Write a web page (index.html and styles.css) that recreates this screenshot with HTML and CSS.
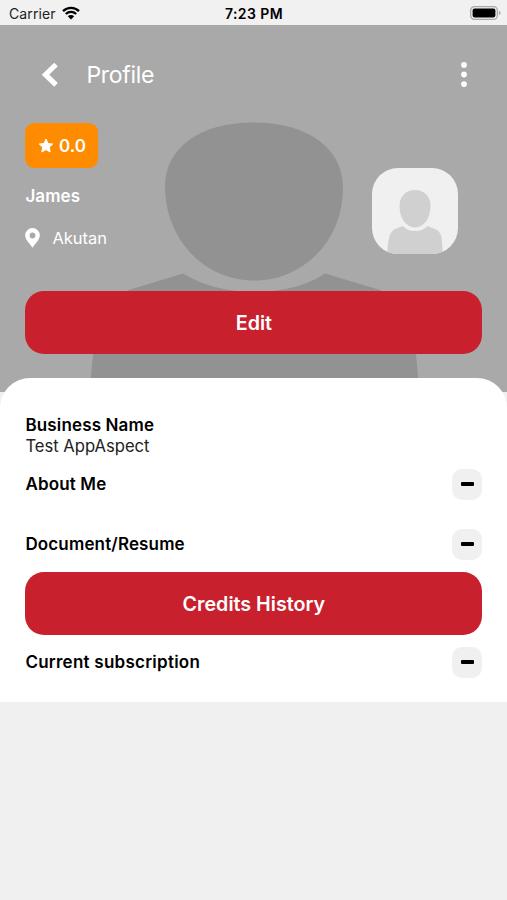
FILE: index.html
```html
<!DOCTYPE html>
<html lang="en">
<head>
    <meta charset="UTF-8">
    <meta name="viewport" content="width=device-width, initial-scale=1.0">
    <title>Profile</title>
    <link rel="stylesheet" href="styles.css">
</head>
<body>
    <div class="status">
        <div class="carrier">
            <span>Carrier</span>
            <svg width="18" height="14" viewBox="0 0 18 14">
                <path d="M1 5.2a11.5 11.5 0 0 1 16 0M3.8 8a7.6 7.6 0 0 1 10.4 0" fill="none" stroke="#000" stroke-width="2.3"/>
                <path d="M9 13.5L5.8 10.3a4.6 4.6 0 0 1 6.4 0z"/>
            </svg>
        </div>
        <span class="time">7:23 PM</span>
        <svg class="battery" width="31" height="14" viewBox="0 0 31 14">
            <rect x=".7" y=".7" width="26.6" height="12.6" rx="3.6" fill="#f1f1f1" stroke="#a9a9a9" stroke-width="1.3"/>
            <rect x="2.6" y="2.6" width="22.8" height="8.8" rx="1.8"/>
            <path d="M28.8 4.8q1.8.6 1.8 2.2t-1.8 2.2z" fill="#a9a9a9"/>
        </svg>
    </div>

    <div class="hero">
        <svg class="cover" width="507" height="367" viewBox="0 25 507 367">
            <path d="M253 122.5C200 122.5 165 148 165 186C165 240 205 280.5 254 280.5C304 280.5 343 240 343 188C343 148 308 122.5 253 122.5z"/>
            <path d="M183 273.5L129 290Q104 300 98 326Q92 352 90 392H419Q417 352 411 326Q404 300 380 290L325 273.5Q297 292 254 292Q214 292 183 273.5z"/>
        </svg>

        <div class="nav">
            <svg width="16" height="26" viewBox="0 0 16 26">
                <path d="M14 2.5L3.5 12.7l10.5 10.2" fill="none" stroke="#fff" stroke-width="5.2"/>
            </svg>
            <h1>Profile</h1>
            <svg class="dots" width="6" height="26" viewBox="0 0 6 26" fill="#fff">
                <circle cx="3" cy="2.9" r="2.9"/>
                <circle cx="3" cy="12.5" r="2.9"/>
                <circle cx="3" cy="22.1" r="2.9"/>
            </svg>
        </div>

        <div class="person">
            <div class="info">
                <div class="rating">
                    <svg width="16" height="15" viewBox="0 0 16 15">
                        <path d="M8 1l2 4.5 4.8.5-3.6 3.2 1 4.8L8 11.6l-4.2 2.4 1-4.8L1.2 6 6 5.500z" fill="#fff" stroke="#fff" stroke-linejoin="round"/>
                    </svg>
                    <span>0.0</span>
                </div>
                <div class="name">James</div>
                <div class="place">
                    <svg width="15" height="20" viewBox="0 0 15 20">
                        <path d="M7.5 0A7.3 7.3 0 0 0 .2 7.3C.2 12 5 15.5 7.5 19.8C10 15.5 14.8 12 14.8 7.3A7.3 7.3 0 0 0 7.5 0zM7.5 4.6a2.9 2.9 0 1 1 0 5.8a2.9 2.9 0 0 1 0-5.8z" fill="#fff" fill-rule="evenodd"/>
                    </svg>
                    <span>Akutan</span>
                </div>
            </div>
            <div class="avatar">
                <svg width="86" height="86" viewBox="0 0 86 86" fill="#d0d0d0">
                    <path d="M43 22C33 22 27.5 29 27.5 38C27.5 50 34 59.500 43 59.500C52 59.500 58.500 50 58.500 38C58.500 29 53 22 43 22z"/>
                    <path d="M31 58Q35 63 43 63Q51 63 55.5 58L63 61Q68.5 63 69.5 70Q70.5 76 70.5 86H15.5Q15.5 76 17 70Q18.500 63 24 60.500z"/>
                </svg>
            </div>
        </div>

        <button class="btn edit">Edit</button>
    </div>

    <div class="sheet">
        <div class="business">
            <h2>Business Name</h2>
            <p>Test AppAspect</p>
        </div>
        <div class="row about">
            <h2>About Me</h2>
            <span class="toggle"></span>
        </div>
        <div class="row document">
            <h2>Document/Resume</h2>
            <span class="toggle"></span>
        </div>
        <button class="btn">Credits History</button>
        <div class="row subscription">
            <h2>Current subscription</h2>
            <span class="toggle"></span>
        </div>
    </div>
</body>
</html>
```
FILE: styles.css
```css
* {
    margin: 0;
    padding: 0;
    box-sizing: border-box;
}
body {
    min-height: 900px;
    background: #f0f0f0;
    font-family: Inter, "Liberation Sans", sans-serif;
    color: #000;
}
svg {
    display: block;
}

/* status bar */
.status {
    display: grid;
    grid-template-columns: 1fr auto 1fr;
    align-items: center;
    height: 25px;
    padding: 2px 6px 0 9px;
    background: #f1f1f1;
    font-size: 14px;
}
.carrier {
    display: flex;
    align-items: center;
    gap: 6px;
    letter-spacing: .1px;
    color: #222;
}
.carrier svg,
.battery {
    margin-top: -2px;
}
.time {
    margin-right: 2px;
    font-weight: 600;
    letter-spacing: .4px;
}
.battery {
    justify-self: end;
}

/* grey cover with the profile */
.hero {
    position: relative;
    height: 367px;
    padding: 37px 24.6px 0 25.4px;
    background: #a9a9a9;
    color: #fff;
}
/* silhouette behind the text */
.cover {
    position: absolute;
    top: 0;
    left: 0;
    fill: #929292;
}
.nav,
.person,
.hero .btn {
    position: relative;
}
.nav {
    display: flex;
    align-items: center;
    height: 25px;
    padding: 0 15px 0 17px;
}
.nav h1 {
    margin-left: 28px;
    font-size: 23px;
    font-weight: 400;
    letter-spacing: -.3px;
}
.dots {
    margin-left: auto;
}
.person {
    display: flex;
    justify-content: space-between;
    height: 168px;
    padding: 36px 24px 0 0;
}
.rating {
    display: flex;
    align-items: center;
    justify-content: center;
    gap: 5px;
    width: 73px;
    height: 45px;
    border-radius: 9px;
    background: #ff8c00;
    font-size: 17px;
    font-weight: 600;
}
.name {
    margin-top: 17px;
    font-size: 17px;
    line-height: 22px;
    font-weight: 600;
    letter-spacing: .1px;
}
.place {
    display: flex;
    align-items: center;
    gap: 12px;
    margin-top: 20px;
    font-size: 16.5px;
    line-height: 22px;
}
.avatar {
    width: 86px;
    height: 86px;
    margin-top: 45px;
    border-radius: 26px;
    background: #f0f0f0;
    overflow: hidden;
}
.btn {
    display: block;
    width: 100%;
    height: 63px;
    margin-top: 36px;
    border: 0;
    border-radius: 19px;
    background: #c9202e;
    color: #fff;
    font-family: inherit;
    font-size: 19.7px;
    font-weight: 600;
}

/* white sheet over the end of the cover */
.sheet {
    position: relative;
    height: 324px;
    margin-top: -14px;
    padding: 37px 24.6px 0 25.4px;
    border-radius: 30px 30px 0 0;
    background: #fff;
}
.sheet h2 {
    font-size: 17px;
    line-height: 21px;
    font-weight: 600;
    letter-spacing: .15px;
}
.business p {
    font-size: 16.6px;
    line-height: 21px;
    color: #222;
}
.row {
    display: flex;
    align-items: center;
    justify-content: space-between;
    height: 30px;
}
.about {
    margin-top: 12px;
}
.document {
    margin-top: 30px;
}
.sheet .btn {
    margin-top: 13px;
}
.subscription {
    margin-top: 12px;
}
.sheet .subscription h2 {
    letter-spacing: .25px;
}
.toggle {
    display: flex;
    align-items: center;
    justify-content: center;
    width: 30px;
    height: 31px;
    border-radius: 10px;
    background: #f0f0f0;
}
.toggle::before {
    content: "";
    width: 13px;
    height: 4px;
    border-radius: 1px;
    background: #000;
}
```
